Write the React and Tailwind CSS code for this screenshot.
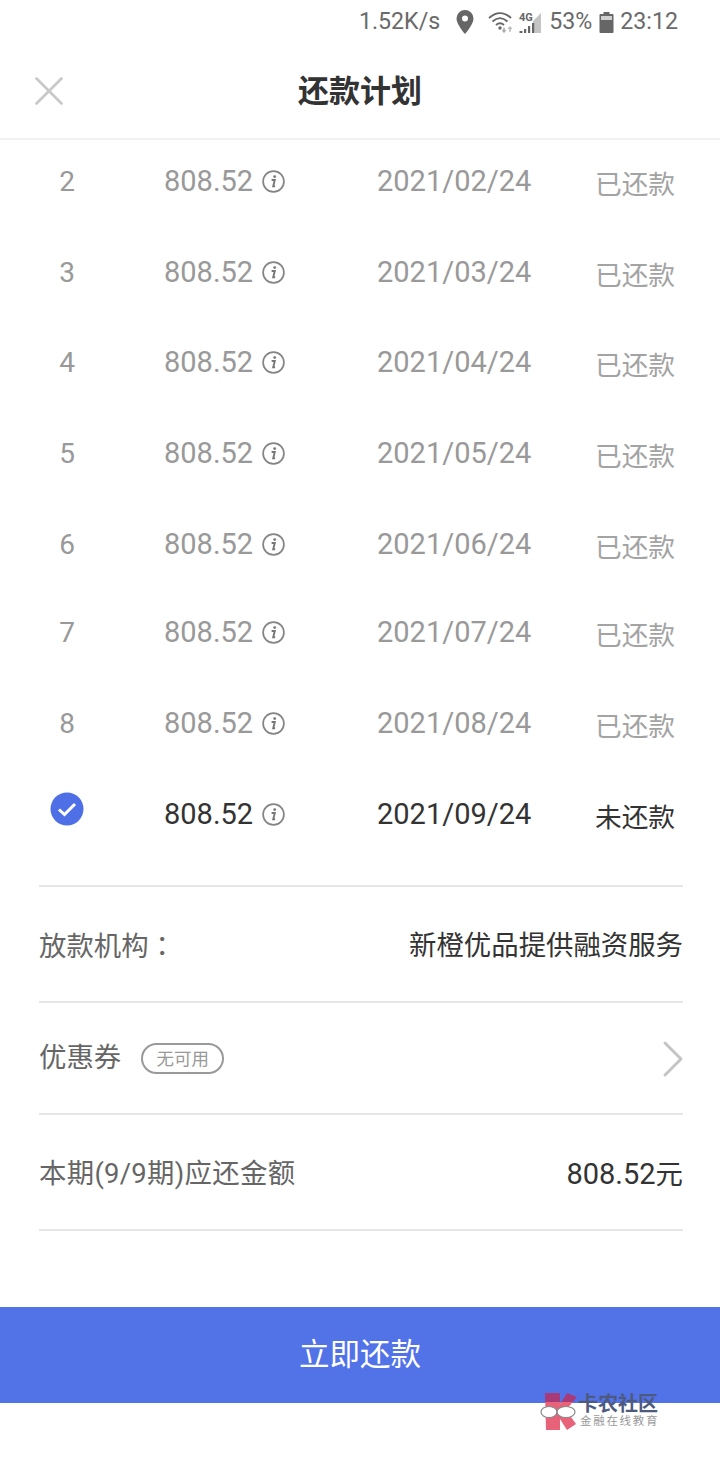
import { X, ChevronRight } from 'lucide-react';

const ROBOTO = 'font-["Roboto","Noto_Sans_CJK_SC",sans-serif]';

const rows = [
  { no: '2', date: '2021/02/24', gap: '' },
  { no: '3', date: '2021/03/24', gap: '' },
  { no: '4', date: '2021/04/24', gap: '-mt-px' },
  { no: '5', date: '2021/05/24', gap: '' },
  { no: '6', date: '2021/06/24', gap: '' },
  { no: '7', date: '2021/07/24', gap: '-mt-[3px]' },
  { no: '8', date: '2021/08/24', gap: '' },
];

function InfoIcon() {
  return (
    <svg width="23" height="23" viewBox="0 0 23 23" className="shrink-0">
      <circle cx="11.5" cy="11.5" r="10.4" fill="none" stroke="#858585" strokeWidth="1.7" />
      <circle cx="12.7" cy="6.6" r="1.4" fill="#777" />
      <path d="M9.6 10h3.2l-1.6 6.2h1.9" fill="none" stroke="#777" strokeWidth="1.9" />
    </svg>
  );
}

function StatusBar() {
  return (
    <div className="h-[44px] flex items-center justify-end pr-[42px] text-[23.2px] leading-none text-[#6a6a6a]">
      <span>1.52K/s</span>
      {/* location pin */}
      <svg width="20" height="26" viewBox="0 0 20 26" className="ml-[15px]">
        <path d="M10 1a8.500 8.500 0 0 0-8.500 8.500C1.500 15.500 10 25 10 25s8.500-9.500 8.500-15.500A8.500 8.500 0 0 0 10 1zm0 11.500a3 3 0 1 1 0-6 3 3 0 0 1 0 6z" fill="#666" />
      </svg>
      {/* wifi + arrows */}
      <svg width="27" height="24" viewBox="0 0 27 24" className="ml-[13px]">
        <path d="M1 8c7-6.500 15-6.500 22 0M4.500 11.500c5-4.500 10-4.500 15 0M8 15c3-2.500 5-2.500 8 0" fill="none" stroke="#666" strokeWidth="1.900" />
        <circle cx="12" cy="18" r="1.700" fill="#666" />
        <path d="M16 17.500v4M14.500 20l1.500 2 1.500-2" fill="none" stroke="#aaa" strokeWidth="1.400" />
        <path d="M22 22v-5M20.300 19l1.700-2 1.700 2" fill="none" stroke="#bbb" strokeWidth="1.400" />
      </svg>
      {/* 4G signal */}
      <svg width="23" height="24" viewBox="0 0 23 24" className="ml-[4px]">
        <path d="M22 3v20h-8V11z" fill="#c4c4c4" />
        <path d="M5 23h2.200v-4H5zM9 23h2.200v-7H9zM13 23h2.200v-10H13zM0.500 23h3v-2h-3z" fill="#666" />
        <text x="0" y="11" fontSize="11" fontWeight="700" fill="#666" fontFamily="Roboto, sans-serif">4G</text>
      </svg>
      <span className="ml-[7px]">53%</span>
      {/* battery */}
      <svg width="15" height="22" viewBox="0 0 15 22" className="ml-[7px]">
        <path d="M4.500 1h6v2h3a1 1 0 0 1 1 1v17a1 1 0 0 1-1 1h-12a1 1 0 0 1-1-1V4a1 1 0 0 1 1-1h3z" fill="#666" />
        <path d="M2 5h11v4H2z" fill="#cfcfcf" />
      </svg>
      <span className="ml-[6px]">23:12</span>
    </div>
  );
}

function PlanRow({ no, date, amountColor, dateColor, statusColor, status, gap, check }) {
  return (
    <div className={`flex items-center h-[91px] ${gap}`}>
      <div className="w-[134px] flex justify-center text-[28px] text-[#999]">
        {check ? (
          <svg width="34" height="34" viewBox="0 0 34 34" className="-mt-[10px]">
            <circle cx="17" cy="17" r="16.500" fill="#4f6fe6" />
            <path d="M9 17.500l5.500 5L25 12" fill="none" stroke="#fff" strokeWidth="3" />
          </svg>
        ) : <span className="mt-[2px]">{no}</span>}
      </div>
      <div className={`w-[243px] pl-[30px] flex items-center gap-[9px] text-[29px] ${amountColor}`}>
        <span className="mt-[2px]">808.52</span>
        <InfoIcon />
      </div>
      <div className={`w-[218px] mt-[2px] text-[29px] ${dateColor}`}>{date}</div>
      <div className={`text-[26.700px] leading-none mt-[9px] ${statusColor}`}>{status}</div>
    </div>
  );
}

export default function App() {
  return (
    <div className={`relative w-[720px] h-[1480px] bg-white overflow-hidden ${ROBOTO}`}>
      {/* Header */}
      <div className="relative z-10 bg-white border-b-2 border-[#f1f1f1] h-[140px]">
        <StatusBar />
        <div className="relative h-[94px] flex items-center justify-center">
          <X className="absolute left-[24px] top-[22px] w-[50px] h-[50px] text-[#c8c8c8]" strokeWidth={1.300} />
          <h1 className="text-[31px] font-bold text-[#333] mt-[2px]">还款计划</h1>
        </div>
      </div>

      {/* Plan rows */}
      <div className="-mt-[4.500px]">
        {rows.map((r) => (
          <PlanRow
            key={r.no}
            no={r.no}
            date={r.date}
            gap={r.gap}
            status="已还款"
            amountColor="text-[#999]"
            dateColor="text-[#999]"
            statusColor="text-[#a3a3a3]"
          />
        ))}
        <PlanRow
          check
          date="2021/09/24"
          gap=""
          status="未还款"
          amountColor="text-[#333]"
          dateColor="text-[#333]"
          statusColor="text-[#333]"
        />
      </div>

      {/* Summary */}
      <div className="mt-[25px] ml-[39px] w-[644px] text-[27.400px] text-[#666]">
        <div className="h-[116px] pt-[6px] border-t-2 border-[#e6e6e6] flex items-center justify-between">
          <span>放款机构<span className='font-["Noto_Sans_CJK_TC"]'>：</span></span>
          <span className="text-[#333]">新橙优品提供融资服务</span>
        </div>
        <div className="h-[112px] pt-[3px] border-t-2 border-[#e6e6e6] flex items-center justify-between">
          <div className="flex items-center gap-[20px]">
            <span>优惠券</span>
            <span className="h-[31px] w-[83px] rounded-full border-2 border-[#999] flex items-center justify-center text-[17.500px] text-[#999]">无可用</span>
          </div>
          <ChevronRight className="w-[64px] h-[64px] -mr-[22px] -my-[20px] text-[#c4c4c4]" strokeWidth={1.100} />
        </div>
        <div className="h-[118px] pt-[6px] border-y-2 border-[#e6e6e6] flex items-center justify-between">
          <span className="tracking-[0.3px]">本期(9/9期)应还金额</span>
          <span className="text-[#333]"><span className="text-[29px]">808.52</span>元</span>
        </div>
      </div>

      {/* Pay button */}
      <button className="mt-[76px] block w-full h-[96px] pt-[1px] bg-[#5272e8] text-white text-[30.500px]">立即还款</button>

      {/* Watermark */}
      <div className="absolute left-[540px] top-[1392px] flex items-start">
        <svg width="38" height="40" viewBox="0 0 38 40">
          <defs>
            <linearGradient id="kBody" x1="0" y1="0" x2="0" y2="1">
              <stop offset="0.25" stopColor="#a83a78" />
              <stop offset="0.25" stopColor="#e8637a" />
            </linearGradient>
          </defs>
          <path d="M5 1h15v11l7-11 10 4-11 13 10 14-9 6-7-11v11H6z" fill="url(#kBody)" />
          <ellipse cx="9" cy="20" rx="8" ry="5.500" fill="#fff" stroke="#888" strokeWidth="1.200" />
          <ellipse cx="26" cy="20" rx="9" ry="5.500" fill="#fff" stroke="#888" strokeWidth="1.200" />
        </svg>
        <div className="flex flex-col mt-[2px]">
          <span className="text-[20px] leading-[20px] font-bold text-[#4d5a80]">卡农社区</span>
          <span className="text-[11.500px] leading-[14px] tracking-[1.700px] ml-[2px] text-[#9a9a9a]">金融在线教育</span>
        </div>
      </div>
    </div>
  );
}
